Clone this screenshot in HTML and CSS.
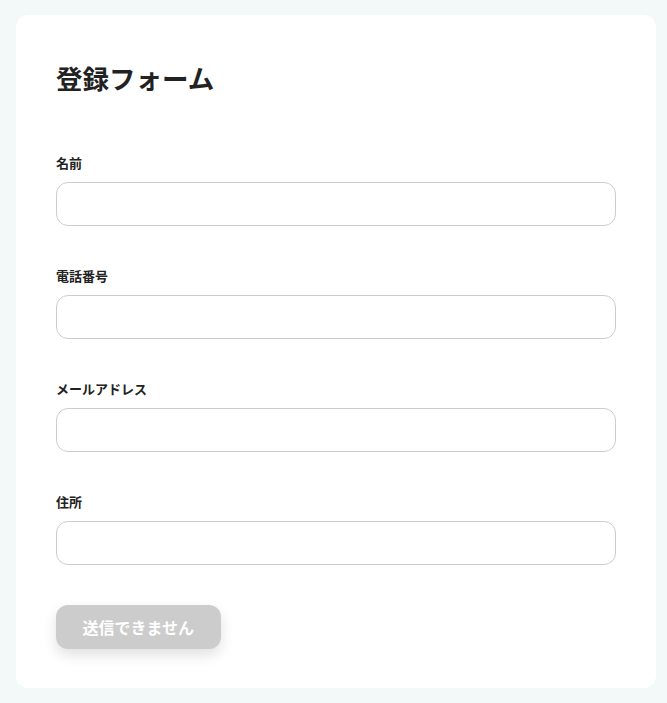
FILE: index.html
```html
<!DOCTYPE html>
<html lang="ja">
<head>
<meta charset="utf-8">
<title>登録フォーム</title>
<link rel="stylesheet" href="styles.css">
</head>
<body>
<main class="card">
  <h1 class="title">登録フォーム</h1>
  <form class="form">
    <div class="field">
      <label class="label" for="name">名前</label>
      <input class="input" id="name" type="text">
    </div>
    <div class="field">
      <label class="label" for="tel">電話番号</label>
      <input class="input" id="tel" type="tel">
    </div>
    <div class="field">
      <label class="label" for="mail">メールアドレス</label>
      <input class="input" id="mail" type="email">
    </div>
    <div class="field">
      <label class="label" for="addr">住所</label>
      <input class="input" id="addr" type="text">
    </div>
    <div class="actions">
      <button class="button" type="button" disabled>送信できません</button>
    </div>
  </form>
</main>
</body>
</html>
```

FILE: styles.css
```css
* { box-sizing: border-box; }
html, body { margin: 0; padding: 0; }
body {
  background: #f2f9f8;
  font-family: "Noto Sans CJK JP", "Noto Sans", sans-serif;
  color: #222;
  padding: 15px 11px 15px 16px;
}
.card {
  width: 640px;
  background: #fff;
  border-radius: 12px;
  padding: 45px 40px 39px;
}
.title {
  margin: 0 0 57px;
  font-size: 26.5px;
  line-height: 36px;
  font-weight: 700;
  color: #222;
}
.form {
  display: flex;
  flex-direction: column;
  gap: 40px;
}
.field {
  display: flex;
  flex-direction: column;
}
.label {
  font-size: 13px;
  line-height: 20px;
  font-weight: 700;
  margin-bottom: 9px;
  color: #222;
}
.input {
  height: 44px;
  width: 560px;
  border: 1px solid #cccccc;
  border-radius: 12px;
  background: #fff;
  font: inherit;
  padding: 0 14px;
}
.actions { display: flex; }
.button {
  height: 44px;
  padding: 0 26.5px;
  border: none;
  border-radius: 12px;
  background: #cccccc;
  color: #fff;
  font-family: inherit;
  font-size: 16px;
  font-weight: 700;
  box-shadow: 0 6px 14px rgba(0, 0, 0, 0.12);
}
```
